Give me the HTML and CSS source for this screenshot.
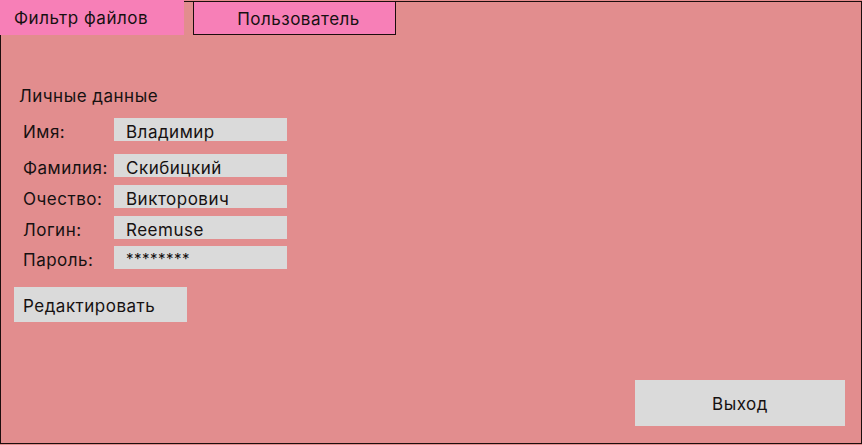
FILE: index.html
```html
<!DOCTYPE html>
<html lang="ru">
<head>
<meta charset="utf-8">
<link rel="stylesheet" href="styles.css">
</head>
<body>
<div class="page">
  <div class="panel">
    <div class="tabs">
      <div class="tab tab-active">Фильтр файлов</div>
      <div class="tab tab-user">Пользователь</div>
    </div>
    <div class="content">
      <div class="heading">Личные данные</div>
      <div class="form">
        <div class="row row-first"><span class="label">Имя:</span><span class="field">Владимир</span></div>
        <div class="row row-second"><span class="label">Фамилия:</span><span class="field">Скибицкий</span></div>
        <div class="row"><span class="label">Очество:</span><span class="field">Викторович</span></div>
        <div class="row"><span class="label">Логин:</span><span class="field">Reemuse</span></div>
        <div class="row row-last"><span class="label">Пароль:</span><span class="field field-pass">********</span></div>
      </div>
      <div class="btn btn-edit">Редактировать</div>
      <div class="btn btn-exit">Выход</div>
    </div>
  </div>
</div>
</body>
</html>
```
FILE: styles.css
```css
* { box-sizing: border-box; }
html, body {
  margin: 0;
  padding: 0;
  background: #e28d8e;
}
body {
  font-family: Inter, "Noto Sans", sans-serif;
  font-size: 17px;
  letter-spacing: 0.5px;
  color: #161111;
}
.page {
  width: 862px;
  height: 445px;
  padding-top: 1px;
}
.panel {
  width: 862px;
  height: 443px;
  border: 1px solid #1c0d0d;
  background: #e28d8e;
  display: flex;
  flex-direction: column;
}
.tabs {
  display: flex;
  align-items: flex-start;
  margin: -2px 0 0 -1px;
  height: 35px;
}
.tab {
  background: #f77fb7;
  display: flex;
  align-items: center;
}
.tab-active {
  width: 184px;
  height: 35px;
  padding-left: 14px;
}
.tab-user {
  margin-left: 9px;
  margin-top: 1px;
  width: 203px;
  height: 34px;
  border: 1px solid #1c0d0d;
  justify-content: center;
  padding-left: 8px;
  padding-top: 1px;
}
.content {
  flex: 1;
  display: flex;
  flex-direction: column;
  padding: 51px 16px 17px 13px;
}
.heading {
  padding-left: 5px;
  line-height: 20px;
}
.form {
  display: flex;
  flex-direction: column;
  padding-left: 9px;
  margin-top: 12px;
}
.row {
  display: flex;
  align-items: center;
  height: 23px;
  margin-top: 8px;
}
.row-first { margin-top: 0; }
.row-second { margin-top: 13px; }
.row-last { margin-top: 7px; }
.label {
  width: 91px;
  padding-top: 4px;
}
.field {
  width: 173px;
  height: 23px;
  background: #dadada;
  padding-left: 12px;
  display: flex;
  align-items: center;
  padding-top: 5px;
}
.field-pass {
  font-size: 15px;
  padding-top: 1px;
}
.btn {
  background: #dadada;
  display: flex;
  align-items: center;
}
.btn-edit {
  margin-top: 18px;
  width: 173px;
  height: 35px;
  padding-left: 9px;
  padding-top: 3px;
}
.btn-exit {
  margin-top: auto;
  align-self: flex-end;
  width: 210px;
  height: 46px;
  justify-content: center;
  padding-top: 2px;
}
```
